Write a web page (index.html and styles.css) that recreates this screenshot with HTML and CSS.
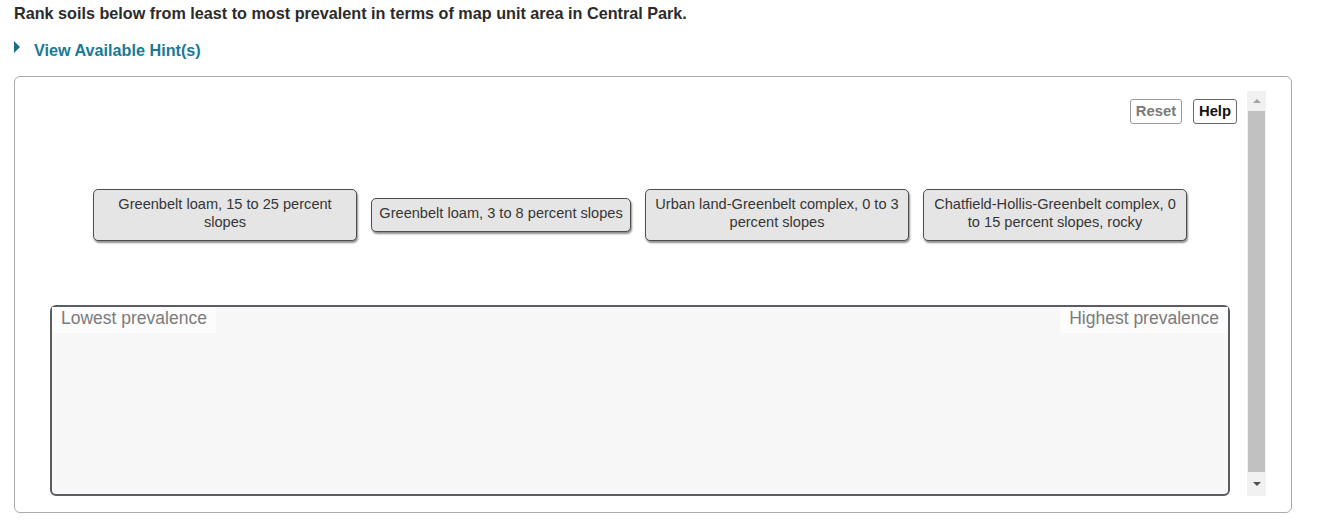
FILE: index.html
```html
<!DOCTYPE html>
<html>
<head>
<meta charset="utf-8">
<link rel="stylesheet" href="styles.css">
</head>
<body>
<div class="page">
  <p class="prompt">Rank soils below from least to most prevalent in terms of map unit area in Central Park.</p>
  <div class="hint"><span class="hint-arrow"></span><span class="hint-text">View Available Hint(s)</span></div>
  <div class="panel">
    <div class="main">
      <div class="toolbar">
        <button class="btn btn-reset">Reset</button>
        <button class="btn btn-help">Help</button>
      </div>
      <div class="cards">
        <div class="card card-wide">Greenbelt loam, 15 to 25 percent slopes</div>
        <div class="card card-narrow">Greenbelt loam, 3 to 8 percent slopes</div>
        <div class="card card-wide">Urban land-Greenbelt complex, 0 to 3 percent slopes</div>
        <div class="card card-wide">Chatfield-Hollis-Greenbelt complex, 0 to 15 percent slopes, rocky</div>
      </div>
      <div class="dropzone">
        <span class="zone-label">Lowest prevalence</span>
        <span class="zone-label">Highest prevalence</span>
      </div>
    </div>
    <div class="scrollbar">
      <div class="sb-btn"><span class="sb-up"></span></div>
      <div class="sb-thumb"></div>
      <div class="sb-btn sb-btn-down"><span class="sb-down"></span></div>
    </div>
  </div>
</div>
</body>
</html>
```

FILE: styles.css
```css
html, body {
  margin: 0;
  padding: 0;
  background: #ffffff;
}
body {
  font-family: "Liberation Sans", Arial, sans-serif;
  color: #333333;
}
.page {
  padding: 4px 38px 0 14px;
}
.prompt {
  margin: 0;
  font-size: 16.2px;
  font-weight: bold;
  line-height: 18px;
  color: #2b2b2b;
}
.hint {
  display: flex;
  align-items: center;
  margin-top: 19px;
  height: 18px;
}
.hint-arrow {
  width: 0;
  height: 0;
  border-top: 6px solid transparent;
  border-bottom: 6px solid transparent;
  border-left: 6px solid #1b6c86;
  margin-right: 14px;
  margin-top: -6px;
}
.hint-text {
  font-size: 16.2px;
  font-weight: bold;
  color: #187a96;
}
.panel {
  margin-top: 17px;
  border: 1px solid #ababab;
  border-radius: 6px;
  padding: 14px 25px 16px 35px;
  display: flex;
  height: 405px;
}
.main {
  flex: 1;
  display: flex;
  flex-direction: column;
}
.toolbar {
  display: flex;
  justify-content: flex-end;
  gap: 11px;
  margin-top: 8px;
  margin-right: -7px;
}
.btn {
  font-family: "Liberation Sans", Arial, sans-serif;
  font-size: 14.8px;
  font-weight: bold;
  height: 25px;
  padding: 0 0 2px 0;
  background: #ffffff;
  border-radius: 3px;
}
.btn-reset {
  width: 52px;
  border: 1px solid #9a9a9a;
  color: #7a7a7a;
}
.btn-help {
  width: 44px;
  border: 1px solid #6a6a6a;
  color: #111111;
}
.cards {
  display: flex;
  justify-content: center;
  align-items: center;
  gap: 14px;
  margin-top: 65px;
  height: 52px;
}
.card {
  box-sizing: border-box;
  background: #e5e5e5;
  border: 1px solid #4e4e4e;
  border-radius: 5px;
  box-shadow: 1px 2px 2px rgba(0, 0, 0, 0.45);
  font-size: 14.6px;
  line-height: 18px;
  color: #363636;
  text-align: center;
  padding: 5px 5px 9px 5px;
}
.card-wide {
  width: 264px;
}
.card-narrow {
  width: 260px;
  padding: 5px 3px 9px 3px;
}
.dropzone {
  margin-top: 64px;
  flex: 1;
  border: 2px solid #5c5c63;
  border-radius: 6px;
  background: #f7f7f7;
  display: flex;
  justify-content: space-between;
  align-items: flex-start;
}
.zone-label {
  background: #fcfcfc;
  color: #7b7b7b;
  font-size: 17.5px;
  line-height: 20px;
  padding: 1px 9px 5px 9px;
}
.scrollbar {
  width: 19px;
  margin-left: 17px;
  background: #f1f1f1;
  display: flex;
  flex-direction: column;
}
.sb-btn {
  height: 20px;
  display: flex;
  align-items: center;
  justify-content: center;
}
.sb-btn-down {
  height: 24px;
}
.sb-thumb {
  flex: 1;
  background: #c1c1c1;
  margin: 0 1px;
}
.sb-up {
  width: 0;
  height: 0;
  border-left: 4px solid transparent;
  border-right: 4px solid transparent;
  border-bottom: 4px solid #a3a3a3;
}
.sb-down {
  width: 0;
  height: 0;
  border-left: 4px solid transparent;
  border-right: 4px solid transparent;
  border-top: 4px solid #505050;
}
```
